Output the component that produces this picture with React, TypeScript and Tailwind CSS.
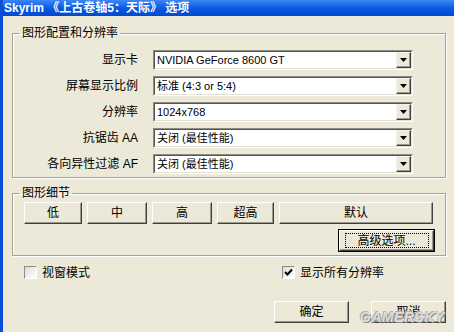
import React from 'react';

const font = '"Liberation Sans", "Noto Sans CJK SC", sans-serif';

const rows = [
  { label: '显示卡', value: 'NVIDIA GeForce 8600 GT' },
  { label: '屏幕显示比例', value: '标准 (4:3 or 5:4)' },
  { label: '分辨率', value: '1024x768' },
  { label: '抗锯齿 AA', value: '关闭 (最佳性能)' },
  { label: '各向异性过滤 AF', value: '关闭 (最佳性能)' },
];

function Combo({ value }: { value: string }) {
  return (
    <div className="flex h-[20px] w-[260px] border border-t-[#8c8c85] border-l-[#8c8c85] border-b-white border-r-white">
      <div className="flex flex-1 border border-t-[#55554f] border-l-[#55554f] border-b-[#e4e2d6] border-r-[#e4e2d6] bg-white">
        <div className="flex flex-1 items-center pl-[2px] text-[11px] leading-none text-black">{value}</div>
        <div className="flex w-[15px] items-center justify-center border border-t-[#f4f3ee] border-l-[#f4f3ee] border-b-[#404040] border-r-[#404040] bg-[#ECE9D8] shadow-[inset_-1px_-1px_0_#9a988c]">
          <svg width="7" height="4" viewBox="0 0 7 4">
            <path d="M0 0h7L3.5 4z" fill="#000" />
          </svg>
        </div>
      </div>
    </div>
  );
}

function Btn({ label, w, primary }: { label: string; w: string; primary?: boolean }) {
  if (primary) {
    return (
      <div className={`${w} h-[23px] border border-black`}>
        <div className="flex h-full items-center justify-center border border-t-white border-l-white border-b-[#404040] border-r-[#404040] bg-[#ECE9D8] shadow-[inset_-1px_-1px_0_#9a988c]">
          <div className="flex h-[15px] w-[84px] items-center justify-center border border-dotted border-black text-[12px] leading-none">
            {label}
          </div>
        </div>
      </div>
    );
  }
  return (
    <button
      className={`${w} flex h-[22px] items-center justify-center border border-t-white border-l-white border-b-[#404040] border-r-[#404040] bg-[#ECE9D8] text-[12px] leading-none text-black shadow-[inset_-1px_-1px_0_#9a988c]`}
    >
      {label}
    </button>
  );
}

function Check({ label, checked }: { label: string; checked?: boolean }) {
  return (
    <div className="flex items-center gap-[5px]">
      <div className="flex h-[13px] w-[13px] items-center justify-center border border-t-[#8c8c85] border-l-[#8c8c85] border-b-white border-r-white bg-gradient-to-br from-[#dcdcd4] to-white">
        {checked && (
          <svg width="9" height="9" viewBox="0 0 9 9">
            <path d="M1 4l2.5 2.5L8 1.5" stroke="#000" strokeWidth="2" fill="none" />
          </svg>
        )}
      </div>
      <span className="text-[12px] leading-none text-black">{label}</span>
    </div>
  );
}

export default function App() {
  return (
    <div className="relative flex h-[332px] w-[454px] flex-col overflow-hidden border-l-[3px] border-[#0A4FD8] bg-[#ECE9D8]" style={{ fontFamily: font }}>
      <div className="flex h-[16px] items-center bg-gradient-to-b from-[#3d86f5] via-[#0a5ae2] to-[#0349cf] pl-[1px] text-[12px] font-bold leading-none text-white">
        Skyrim 《上古卷轴5：天际》 选项
      </div>

      <div className="flex flex-col pl-[9px] pr-[8px]">
        <fieldset className="mt-[9px] border border-[#a4a396] pb-[3px] shadow-[1px_1px_0_#fff,inset_1px_1px_0_#fff]">
          <legend className="ml-[7px] px-[2px] text-[12px] leading-[16px]">图形配置和分辨率</legend>
          <div className="mt-[9px] flex flex-col gap-[6px]">
            {rows.map((r) => (
              <div key={r.label} className="flex items-center gap-[15px]">
                <div className="w-[125px] text-right text-[12px] leading-none">{r.label}</div>
                <Combo value={r.value} />
              </div>
            ))}
          </div>
        </fieldset>

        <fieldset className="mt-[7px] border border-[#a4a396] pb-[3px] shadow-[1px_1px_0_#fff,inset_1px_1px_0_#fff]">
          <legend className="ml-[7px] px-[2px] text-[12px] leading-[16px]">图形细节</legend>
          <div className="mt-[1px] flex gap-[5px] pl-[11px]">
            <Btn label="低" w="w-[58px]" />
            <Btn label="中" w="w-[60px]" />
            <Btn label="高" w="w-[60px]" />
            <Btn label="超高" w="w-[57px]" />
            <Btn label="默认" w="w-[154px]" />
          </div>
          <div className="mt-[5px] flex justify-end pr-[10px]">
            <Btn label="高级选项..." w="w-[97px]" primary />
          </div>
        </fieldset>

        <div className="mt-[10px] flex pl-[12px]">
          <div className="w-[258px]">
            <Check label="视窗模式" />
          </div>
          <Check label="显示所有分辨率" checked />
        </div>

        <div className="mt-[22px] flex justify-end gap-[22px] pr-[-1px]">
          <Btn label="确定" w="w-[75px]" />
          <Btn label="取消" w="w-[75px]" />
        </div>
      </div>

      <span className="pointer-events-none absolute left-[357px] top-[307px] text-[14px] font-bold italic tracking-[0.5px] text-[#dcdcdc] [text-shadow:1px_1px_0_#8a8a8a,-1px_-1px_0_#b0b0b0]">
        GAMERSKY
      </span>
    </div>
  );
}
